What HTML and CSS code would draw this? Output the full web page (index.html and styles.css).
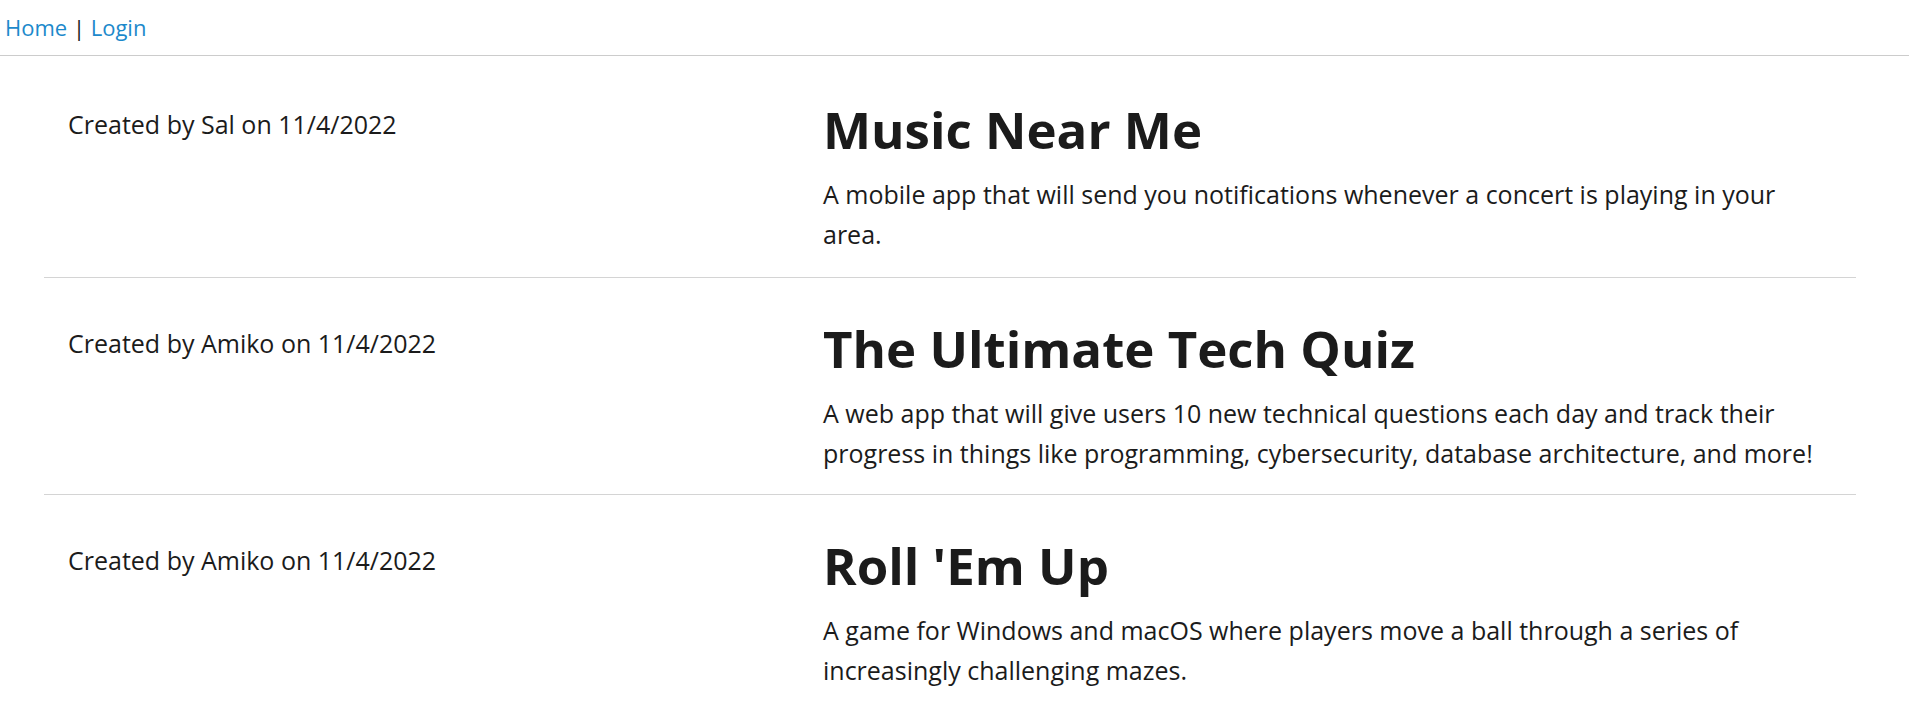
FILE: index.html
```html
<!DOCTYPE html>
<html lang="en">
<head>
<meta charset="utf-8">
<title>Projects</title>
<link rel="stylesheet" href="styles.css">
</head>
<body>
<nav class="topnav"><a href="#">Home</a> | <a href="#">Login</a></nav>
<main class="list">
  <article class="item">
    <div class="meta">Created by Sal on 11/4/2022</div>
    <div class="body">
      <h1>Music Near Me</h1>
      <p>A mobile app that will send you notifications whenever a concert is playing in your area.</p>
    </div>
  </article>
  <article class="item">
    <div class="meta">Created by Amiko on 11/4/2022</div>
    <div class="body">
      <h1>The Ultimate Tech Quiz</h1>
      <p>A web app that will give users 10 new technical questions each day and track their progress in things like programming, cybersecurity, database architecture, and more!</p>
    </div>
  </article>
  <article class="item">
    <div class="meta">Created by Amiko on 11/4/2022</div>
    <div class="body">
      <h1>Roll 'Em Up</h1>
      <p>A game for Windows and macOS where players move a ball through a series of increasingly challenging mazes.</p>
    </div>
  </article>
</main>
</body>
</html>
```
FILE: styles.css
```css
body {
  margin: 0;
  font-family: "Open Sans", "Noto Sans", sans-serif;
  color: #1b1b1b;
  background: #ffffff;
}

.topnav {
  padding: 11px 5px;
  font-size: 22px;
  line-height: 33px;
  border-bottom: 1px solid #cccccc;
  margin-bottom: 3px;
}

.topnav a {
  color: #1c89cb;
  text-decoration: none;
}

.list {
  margin: 0 53px 0 44px;
}

.item {
  display: grid;
  grid-template-columns: 5fr 7fr;
  padding: 40px 0 21px;
  border-bottom: 1px solid #d4d4d4;
}

.item:first-child {
  padding-bottom: 23px;
}

.item:last-child {
  border-bottom: none;
}

.meta,
.body {
  padding: 0 24px;
}

.meta {
  padding-top: 6px;
  font-size: 25px;
  line-height: 39.5px;
}

.body h1 {
  margin: 0 0 16px;
  font-size: 51px;
  line-height: 60px;
  font-weight: 700;
}

.body p {
  margin: 0;
  font-size: 25px;
  line-height: 39.5px;
}
```
